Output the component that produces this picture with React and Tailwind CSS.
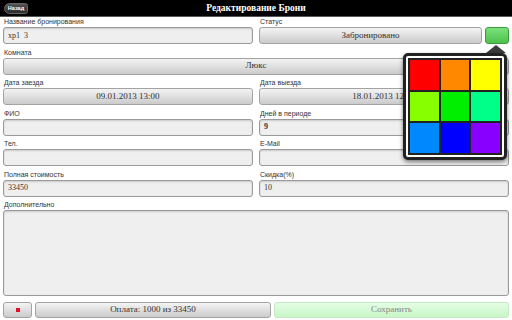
const serif = { fontFamily: '"Liberation Serif", "DejaVu Serif", serif' }

function Label({ children }) {
  return (
    <div className="h-[10px] pl-[1px] text-[7px] leading-[10px] text-[#333] font-['Liberation_Sans',sans-serif] whitespace-nowrap">
      {children}
    </div>
  )
}

function Input({ value, bold }) {
  return (
    <div
      className={`h-[17px] rounded-[3px] border border-[#9a9a9a] bg-[#efefef] shadow-[inset_0_1px_2px_rgba(0,0,0,0.15)] px-[4px] flex items-center text-[8px] text-[#333] whitespace-pre ${bold ? 'font-bold' : ''}`}
      style={serif}
    >
      {value}
    </div>
  )
}

function Button({ children, className = '' }) {
  return (
    <div
      className={`h-[17px] rounded-[3px] border border-[#a3a3a3] bg-gradient-to-b from-[#f4f4f4] to-[#cbcbcb] flex items-center justify-center text-[9px] text-[#333] ${className}`}
      style={serif}
    >
      {children}
    </div>
  )
}

function Field({ label, children }) {
  return (
    <div className="flex flex-col">
      <Label>{label}</Label>
      {children}
    </div>
  )
}

const colors = [
  'bg-[#ff0000]', 'bg-[#ff8800]', 'bg-[#ffff00]',
  'bg-[#88ff00]', 'bg-[#00ee00]', 'bg-[#00ff88]',
  'bg-[#0088ff]', 'bg-[#0000ff]', 'bg-[#8800ff]',
]

export default function App() {
  return (
    <div className="relative w-[512px] h-[320px] overflow-hidden bg-white">
      {/* header */}
      <div className="h-[17px] bg-black border-b border-[#555] flex items-center relative">
        <div className="absolute left-[4px] top-[3px] h-[11px] w-[24px] rounded-[3px] rounded-l-[6px] bg-gradient-to-b from-[#555] to-[#2a2a2a] border border-[#666] flex items-center justify-center text-[5.5px] font-bold text-white font-['Liberation_Sans',sans-serif]">
          Назад
        </div>
        <div className="w-full text-center text-white font-bold text-[9.5px]" style={serif}>
          Редактирование Брони
        </div>
      </div>

      <div className="px-[3px] flex flex-col gap-[3.5px]">
        <div className="grid grid-cols-2 gap-x-[6px]">
          <Field label="Название бронирования">
            <Input value="хр1  3" />
          </Field>
          <Field label="Статус">
            <div className="flex gap-[3px]">
              <Button className="flex-1">Забронировано</Button>
              <div className="w-[24px] h-[17px] rounded-[3px] border border-[#3c9a3c] bg-gradient-to-b from-[#7be07b] to-[#4cc24c]" />
            </div>
          </Field>
        </div>

        <Field label="Комната">
          <Button>Люкс</Button>
        </Field>

        <div className="grid grid-cols-2 gap-x-[6px] gap-y-[3.5px]">
          <Field label="Дата заезда">
            <Button>09.01.2013 13:00</Button>
          </Field>
          <Field label="Дата выезда">
            <Button>18.01.2013 12:00</Button>
          </Field>
          <Field label="ФИО">
            <Input value="" />
          </Field>
          <Field label="Дней в периоде">
            <Input value="9" bold />
          </Field>
          <Field label="Тел.">
            <Input value="" />
          </Field>
          <Field label="E-Mail">
            <Input value="" />
          </Field>
          <Field label="Полная стоимость">
            <Input value="33450" />
          </Field>
          <Field label="Скидка(%)">
            <Input value="10" />
          </Field>
        </div>

        <Field label="Дополнительно">
          <div className="h-[86px] rounded-[3px] border border-[#9a9a9a] bg-[#efefef] shadow-[inset_0_1px_2px_rgba(0,0,0,0.15)]" />
        </Field>

        <div className="flex gap-[3px] mt-[2.5px]">
          <Button className="w-[29px] !h-[16px]">
            <div className="w-[4px] h-[4px] bg-[#e0102a]" />
          </Button>
          <Button className="flex-1 !h-[16px]">Оплата: 1000 из 33450</Button>
          <div
            className="w-[235px] h-[16px] rounded-[3px] border border-[#c5e8c5] bg-gradient-to-b from-[#e4fde4] to-[#c8f7c8] flex items-center justify-center text-[9px] text-[#888]"
            style={serif}
          >
            Сохранить
          </div>
        </div>
      </div>

      {/* colour popup */}
      <div className="absolute left-[486px] top-[45px] w-0 h-0 border-l-[10px] border-r-[10px] border-b-[8px] border-l-transparent border-r-transparent border-b-[#3a3a3a]" />
      <div className="absolute left-[403px] top-[53px] w-[104px] h-[107px] rounded-[5px] border-[3px] border-[#222] bg-white p-[2px] shadow-[0_2px_4px_rgba(0,0,0,0.5)]">
        <div className="grid grid-cols-3 grid-rows-3 w-full h-full border border-[#222]">
          {colors.map((c, i) => (
            <div key={i} className={`${c} border border-[#222]`} />
          ))}
        </div>
      </div>
    </div>
  )
}
